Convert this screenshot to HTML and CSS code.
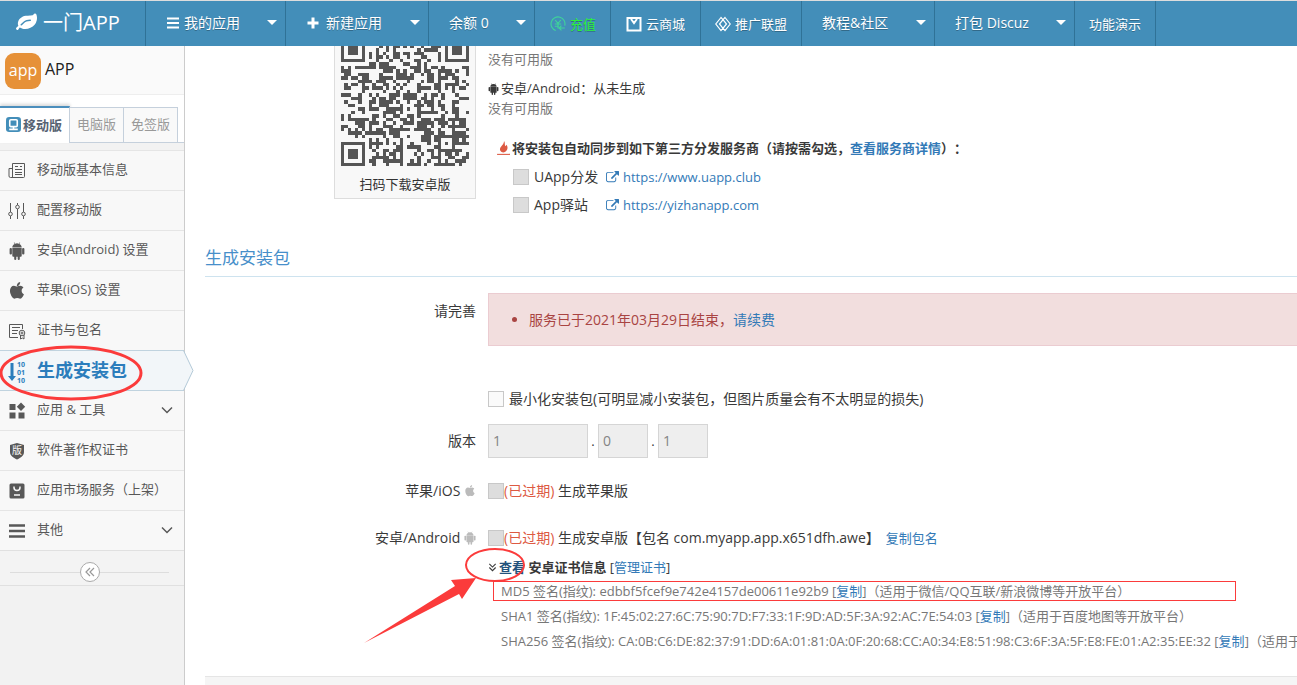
FILE: index.html
```
<!DOCTYPE html>
<html lang="zh-CN">
<head>
<meta charset="utf-8">
<title>一门APP - 生成安装包</title>
<link rel="stylesheet" href="styles.css">
</head>
<body>
<svg class="defs" aria-hidden="true">
  <symbol id="apple" viewBox="0 0 1792 1792"><path d="M1585 1215q-39 125-123 250-129 196-257 196-49 0-140-32-86-32-151-32-61 0-142 33-81 34-132 34-152 0-301-259-147-261-147-503 0-228 113-374 113-144 284-144 72 0 177 30 104 30 138 30 45 0 143-34 102-34 173-34 119 0 213 65 52 36 104 100-79 67-114 118-65 94-65 207 0 124 69 223t158 126zm-376-1173q0 61-29 136-30 75-93 138-54 54-108 72-37 11-104 17 3-149 78-257 74-107 250-148 1 3 2.500 11t2.500 11q0 4 .5 10t.5 10z"/></symbol>
  <symbol id="android" viewBox="0 0 16 18"><path d="M3.300 5.600C3.300 3.600 4.500 2.500 5.600 1.900L4.800.5l.4-.3.900 1.500a5.500 5.500 0 0 1 3.800 0L10.800.2l.4.3-.8 1.400c1.100.6 2.300 1.700 2.300 3.700zM3.300 6h9.400v7.800q0 .9-.9.900h-1v2.200a1.050 1.050 0 0 1-2.100 0v-2.200H7.300v2.200a1.050 1.050 0 0 1-2.100 0v-2.200h-1q-.9 0-.9-.9z"/><rect x=".6" y="6" width="2.300" height="6.400" rx="1"/><rect x="13.100" y="6" width="2.300" height="6.400" rx="1"/></symbol>
  <symbol id="external" viewBox="0 0 1792 1792"><path d="M1408 928v320q0 119-84.500 203.500t-203.500 84.500h-832q-119 0-203.500-84.500t-84.500-203.500v-832q0-119 84.500-203.500t203.500-84.500h704q14 0 23 9t9 23v64q0 14-9 23t-23 9h-704q-66 0-113 47t-47 113v832q0 66 47 113t113 47h832q66 0 113-47t47-113v-320q0-14 9-23t23-9h64q14 0 23 9t9 23zm384-864v512q0 26-19 45t-45 19-45-19l-176-176-652 652q-10 10-23 10t-23-10l-114-114q-10-10-10-23t10-23l652-652-176-176q-19-19-19-45t19-45 45-19h512q26 0 45 19t19 45z"/></symbol>
  <symbol id="leaf" viewBox="0 0 1792 1792"><path d="M1280 704q0-26-19-45t-45-19q-172 0-318 49.500t-259.500 134-235.500 219.500q-19 21-19 45 0 26 19 45t45 19q24 0 45-19 27-24 74-71t67-66q137-124 268.500-176t313.500-52q26 0 45-19t19-45zm512-198q0 95-20 193-46 224-184.500 383t-357.500 268q-214 108-438 108-148 0-286-47-15-5-88-42t-96-37q-16 0-39.500 32t-45 70-52.500 70-60 32q-43 0-63.500-17.500t-45.500-59.500q-2-4-6-11t-5.500-10-3-9.500-1.500-13.500q0-35 31-73.500t68-65.500 68-56 31-48q0-4-14-38t-16-44q-9-51-9-104 0-115 43.500-220t119-184.500 170.500-139 204-95.500q55-18 145-25.500t179.500-9 178.500-6 163.500-24 113.500-56.500l29.500-29.500 29.500-28 27-20 36.500-16 43.500-4.500q39 0 70.500 46t47.500 112 24 124 8 96z"/></symbol>
  <symbol id="chevron" viewBox="0 0 12 12"><path d="M1 3.500l5 5 5-5" fill="none" stroke="currentColor" stroke-width="1.500"/></symbol>
</svg>

<header class="navbar">
  <a class="brand" href="#"><svg><use href="#leaf"/></svg><span>一门APP</span></a>
  <nav class="nav">
    <a class="nav-item w-apps" href="#"><svg class="nav-icon" viewBox="0 0 14 14"><path d="M1 2.500h12M1 7h12M1 11.500h12" stroke="currentColor" stroke-width="2"/></svg><span>我的应用</span><i class="caret"></i></a>
    <a class="nav-item w-new" href="#"><svg class="nav-icon plus" viewBox="0 0 14 14"><path d="M1.500 7h11M7 1.500v11" stroke="currentColor" stroke-width="3"/></svg><span>新建应用</span><i class="caret"></i></a>
    <a class="nav-item w-money" href="#"><span>余额 0</span><i class="caret"></i></a>
    <a class="nav-item small recharge" href="#"><svg class="nav-icon" viewBox="0 0 14 14" fill="none" stroke="currentColor"><path d="M5 12.700A6.100 6.100 0 1 1 12.900 8.500M4.500 3.500L7 6.500l2.500-3M4.200 7h5.600M4.200 9h3.500M7 6.500v4.500M13 10.500H8m2-2l-2 2 2 2"/></svg><span>充值</span></a>
    <a class="nav-item small" href="#"><svg class="nav-icon" viewBox="0 0 16 16" fill="none" stroke="currentColor" stroke-width="2"><path d="M5 2H1.500v12.500h13V2H11M1 2h14M5 3l3 4 3-4"/></svg><span>云商城</span></a>
    <a class="nav-item small union" href="#"><svg class="nav-icon" viewBox="0 0 16 16" fill="none" stroke="currentColor" stroke-width="1.200"><path d="M6 1.500L.8 8 6 14.500l2-2.200L4.500 8 8 3.700zM10 1.500L15.200 8 10 14.500l-2-2.200L11.500 8 8 3.700z"/></svg><span>推广联盟</span></a>
    <a class="nav-item w-course" href="#"><span>教程&amp;社区</span><i class="caret"></i></a>
    <a class="nav-item w-discuz" href="#"><span>打包 Discuz</span><i class="caret"></i></a>
    <a class="nav-item small" href="#"><span>功能演示</span></a>
  </nav>
</header>

<div class="page">
  <aside class="sidebar">
    <div class="app-head"><span class="app-logo">app</span><strong>APP</strong></div>
    <div class="tabs">
      <button class="tab active" type="button"><svg viewBox="0 0 14 14"><rect width="14" height="14" rx="3" fill="#438eb9"/><rect x="3.500" y="2.500" width="7" height="6.500" rx="1" fill="none" stroke="#fff" stroke-width="1.500"/><path d="M3 11.500h8M7 9v2" stroke="#fff" stroke-width="1.500"/></svg>移动版</button>
      <button class="tab" type="button">电脑版</button>
      <button class="tab" type="button">免签版</button>
    </div>
    <ul class="menu">
      <li><a href="#"><svg viewBox="0 0 18 18" fill="none" stroke="currentColor"><path d="M4.500 15.500v-14h12v13q0 1-1 1h-13q-1.500 0-1.500-1.500V6.500h3.500M7 4.500h3M7 7.500h7M7 10.500h7M7 12.500h7M12 4.500h2"/></svg>移动版基本信息</a></li>
      <li><a href="#"><svg viewBox="0 0 18 18" fill="none" stroke="currentColor"><path d="M2.500 1v9M2.500 14v3M9.500 1v2M9.500 7v10M15.500 1v9M15.500 14v3"/><circle cx="2.500" cy="12" r="1.800"/><circle cx="9.500" cy="5" r="1.800"/><circle cx="15.500" cy="12" r="1.800"/></svg>配置移动版</a></li>
      <li><a href="#"><svg><use href="#android"/></svg>安卓(Android) 设置</a></li>
      <li><a href="#"><svg><use href="#apple"/></svg>苹果(iOS) 设置</a></li>
      <li><a href="#"><svg viewBox="0 0 18 18" fill="none" stroke="currentColor"><path d="M10 15.500H1.500v-13h13V7M4 5.500h8M4 8.500h6M4 11.500h5M12.500 13v4l1.800-1 1.700 1v-4"/><circle cx="14" cy="11" r="2.800"/><circle cx="14" cy="11" r="1"/></svg>证书与包名</a></li>
      <li class="current"><a href="#"><svg class="sort" viewBox="0 0 18 24"><path d="M2.500 3h3v13h2.500l-4 5-4-5h2.500z"/><text x="9" y="7">10</text><text x="9" y="15">01</text><text x="9" y="23">10</text></svg>生成安装包</a>
        <svg class="pointer" viewBox="0 0 11 41"><path d="M.5.500l9.500 20-9.500 20" fill="#f2f6f9" stroke="#b3c9d8"/></svg>
        <svg class="mark" viewBox="0 0 144 56"><ellipse cx="71" cy="28" rx="70" ry="26"/></svg></li>
      <li><a href="#"><svg viewBox="0 0 18 18"><path d="M1.500 2h6v6h-6zM1.500 10.500h6v6h-6zM10.500 10.500h6v6h-6zM13 .5l4.200 4.200L13 9 8.800 4.700z"/></svg>应用 &amp; 工具<svg class="fold"><use href="#chevron"/></svg></a></li>
      <li><a href="#"><svg viewBox="0 0 18 18"><path d="M9 1l7 2v7c0 4-4 6-7 7.500C6 16 2 14 2 10V3z"/><text class="shield" x="4" y="12">版</text></svg>软件著作权证书</a></li>
      <li><a href="#"><svg viewBox="0 0 18 18"><rect x="1.500" y="1.500" width="15" height="15" rx="1.500"/><path d="M6 4.500v1a3 3 0 0 0 6 0v-1M6 13h6" fill="none" stroke="#f8f8f8" stroke-width="1.500"/></svg>应用市场服务（上架）</a></li>
      <li><a href="#"><svg viewBox="0 0 18 18"><path d="M1 3.500h16M1 9h16M1 14.500h16" stroke="currentColor" stroke-width="2.500"/></svg>其他<svg class="fold"><use href="#chevron"/></svg></a></li>
    </ul>
    <div class="collapse"><button type="button" aria-label="收起菜单"><svg viewBox="0 0 12 12" fill="none" stroke="currentColor" stroke-width="1.200"><path d="M6 2L2 6l4 4M10 2L6 6l4 4"/></svg></button></div>
  </aside>

  <main class="content">
    <section class="row summary">
      <div class="qr-cell"><figure class="qr"><svg id="qr" viewBox="0 2.300 37 34.700" preserveAspectRatio="none" shape-rendering="crispEdges"></svg><figcaption>扫码下载安卓版</figcaption></figure></div>
      <div class="status">
        <p class="muted">没有可用版</p>
        <p class="platform"><svg class="tiny"><use href="#android"/></svg>安卓/Android：从未生成</p>
        <p class="muted">没有可用版</p>
        <p class="sync"><svg viewBox="0 0 12 14"><path d="M6.500 0C8 2 6.500 3.500 8 5l.7-1.500C10.800 6 9.800 9.800 6 10.800 2.500 10 2 7.500 3.500 5.500 4.500 4 6.500 3 6.500 0z"/><path d="M0 12h12v1H0z"/></svg><b>将安装包自动同步到如下第三方分发服务商（请按需勾选，<a href="#">查看服务商详情</a>）：</b></p>
        <div class="vendor"><label><input type="checkbox" disabled>UApp分发</label><a href="#"><svg class="ext"><use href="#external"/></svg>https://www.uapp.club</a></div>
        <div class="vendor"><label><input type="checkbox" disabled>App驿站</label><a href="#"><svg class="ext"><use href="#external"/></svg>https://yizhanapp.com</a></div>
      </div>
    </section>

    <h3>生成安装包</h3>

    <section class="row alert-row">
      <div class="label">请完善</div>
      <ul class="alert"><li>服务已于2021年03月29日结束，<a href="#">请续费</a></li></ul>
    </section>
    <section class="row minimize">
      <div></div>
      <label class="check spaced"><input type="checkbox">最小化安装包(可明显减小安装包，但图片质量会有不太明显的损失)</label>
    </section>
    <section class="row version">
      <label class="label" for="major">版本</label>
      <div class="fields"><input id="major" class="major" value="1" disabled><span>.</span><input value="0" aria-label="次版本" disabled><span>.</span><input value="1" aria-label="修订版本" disabled></div>
    </section>
    <section class="row ios">
      <div class="label">苹果/iOS <svg class="os"><use href="#apple"/></svg></div>
      <label class="check"><input type="checkbox" disabled><span class="expired">(已过期)</span>&nbsp;生成苹果版</label>
    </section>
    <section class="row droid">
      <div class="label">安卓/Android <svg class="os"><use href="#android"/></svg></div>
      <div class="check"><label class="check"><input type="checkbox" disabled><span class="expired">(已过期)</span>&nbsp;生成安卓版【包名 com.myapp.app.x651dfh.awe】</label><a class="copy" href="#">复制包名</a></div>
    </section>
    <section class="row">
      <div></div>
      <div class="cert">
        <p class="cert-head"><svg class="double" viewBox="0 0 10 10"><path d="M1.500 1L5 4.500 8.500 1M1.500 5L5 8.500 8.500 5" fill="none" stroke="currentColor" stroke-width="1.200"/></svg><a class="view" href="#">查看</a> <b>安卓证书信息</b> [<a href="#">管理证书</a>]
          <svg class="mark-arrow" viewBox="0 0 164 100"><ellipse cx="133" cy="20" rx="29" ry="16"/><path d="M2 98L93 41l-4-6 25-2-14 21-3-5z"/></svg></p>
        <p class="hash boxed">MD5 签名(指纹): edbbf5fcef9e742e4157de00611e92b9 [<a href="#">复制</a>]（适用于微信/QQ互联/新浪微博等开放平台）</p>
        <p class="hash">SHA1 签名(指纹): 1F:45:02:27:6C:75:90:7D:F7:33:1F:9D:AD:5F:3A:92:AC:7E:54:03 [<a href="#">复制</a>]（适用于百度地图等开放平台）</p>
        <p class="hash">SHA256 签名(指纹): CA:0B:C6:DE:82:37:91:DD:6A:01:81:0A:0F:20:68:CC:A0:34:E8:51:98:C3:6F:3A:5F:E8:FE:01:A2:35:EE:32 [<a href="#">复制</a>]（适用于开放平台）</p>
      </div>
    </section>
    <div class="actions"></div>
  </main>
</div>
<script src="qr.js"></script>
</body>
</html>
```

FILE: styles.css
```
* { box-sizing: border-box; }
body {
  margin: 0;
  height: 100vh;
  display: flex;
  flex-direction: column;
  overflow: hidden;
  background: #fff;
  color: #393939;
  font: 13px/20px "Open Sans", "Noto Sans CJK SC", sans-serif;
  text-spacing-trim: space-all;
}
p, ul, h3, figure { margin: 0; padding: 0; }
ul { list-style: none; }
a { color: #337ab7; text-decoration: none; }
:where(svg) { flex: none; }
:where(svg:not([fill])) { fill: currentColor; }
button, input { font: inherit; }
.defs { display: none; }

/* Top bar */
.navbar {
  display: flex;
  flex: none;
  height: 46px;
  border-top: 1px solid #ddd;
  background: #438eb9;
}
.brand {
  display: flex;
  align-items: center;
  gap: 6px;
  width: 145px;
  padding: 0 0 2px 16px;
  color: #fff;
  font-size: 20px;
}
.brand svg { width: 21px; height: 21px; }
.nav { display: flex; border-left: 1px solid #2f7297; }
.nav-item {
  display: flex;
  align-items: center;
  padding: 0 16px 2px 20px;
  border-right: 1px solid #2f7297;
  color: #fff;
  font-size: 14px;
  text-shadow: 0 1px 0 rgba(0, 0, 0, .25);
  white-space: nowrap;
}
.nav-item.small { font-size: 13px; padding: 0 14px; }
.nav-icon { width: 14px; height: 14px; margin-right: 4px; }
.nav-icon.plus { margin-right: 6px; }
.small .nav-icon { width: 16px; height: 16px; }
.w-apps { width: 140px; }
.w-new { width: 143px; }
.w-money { width: 106px; }
.w-course { width: 133px; }
.w-discuz { width: 140px; }
.caret {
  margin-left: auto;
  margin-right: -8px;
  border: 5px solid transparent;
  border-top-color: #fff;
  border-bottom: 0;
}
.nav-item.recharge { padding: 0 14px 0 15px; color: #2bf03c; }
.recharge svg { color: #3fd39a; }
.nav-item.small:nth-child(5) { padding: 0 15px; }

/* Sidebar */
.page { display: flex; flex: 1; min-height: 0; }
.sidebar {
  flex: none;
  width: 185px;
  border-right: 1px solid #ccc;
  background: #f2f2f2;
}
.app-head {
  display: flex;
  gap: 4px;
  height: 49px;
  padding: 7px 5px 0;
  border-bottom: 1px solid #eee;
  background: #fafafa;
  font-size: 16px;
}
.app-head strong { font-weight: 400; line-height: 32px; color: #222; }
.app-logo {
  width: 36px;
  height: 36px;
  border-radius: 9px;
  background: #e69138;
  color: #fff;
  line-height: 34px;
  text-align: center;
}
.tabs {
  display: flex;
  align-items: stretch;
  height: 48px;
  padding-top: 11px;
  background: linear-gradient(#c5d0dc, #c5d0dc) bottom / 100% 1px no-repeat #fff;
}
.tab {
  width: 54px;
  padding: 0 0 2px;
  margin-top: 1px;
  border: 1px solid #c5d0dc;
  border-left: 0;
  background: #f9f9f9;
  color: #999;
}
.tab.active {
  display: flex;
  align-items: center;
  gap: 2px;
  width: 70px;
  margin-top: 0;
  padding-left: 6px;
  border-top: 2px solid #4c8fbd;
  border-bottom: 0;
  background: #fff;
  color: #576373;
  font-weight: 700;
  box-shadow: 0 -2px 3px rgba(0, 0, 0, .15);
}
.tab.active svg { width: 15px; height: 15px; }
.menu { padding-top: 7px; }
.menu li { position: relative; border-top: 1px solid #e5e5e5; background: #f8f8f8; }
.menu a {
  display: flex;
  align-items: center;
  gap: 11px;
  height: 39px;
  padding: 0 10px 4px 8px;
  color: #585858;
}
.menu a svg { width: 18px; height: 18px; margin-top: 4px; }
.menu a .fold { width: 12px; height: 12px; margin: 2px 1px 0 auto; }
.menu .current { border-color: #c0d3df; box-shadow: 0 1px 0 #c0d3df; background: #f2f6f9; z-index: 1; }
.menu .current a { padding-bottom: 2px; color: #2b7dbc; font-size: 18px; font-weight: 700; }
.menu a .sort { height: 24px; }
.sort text { font: 700 7px "Open Sans", sans-serif; }
.menu .shield { font-size: 10px; fill: #f8f8f8; }
.pointer { position: absolute; top: -1px; right: -10px; width: 11px; height: 41px; }
.mark { position: absolute; left: 0; top: -6px; width: 144px; height: 56px; fill: none; stroke: #fb3b3b; stroke-width: 3; }
.collapse {
  height: 36px;
  display: grid;
  place-items: center;
  padding-right: 5px;
  padding-top: 7px;
  border-top: 1px solid #e0e0e0;
  border-bottom: 1px solid #e0e0e0;
  background: linear-gradient(#ddd, #ddd) 10px 21px / 159px 1px no-repeat #f3f3f3;
}
.collapse button {
  display: grid;
  place-items: center;
  width: 20px;
  height: 20px;
  padding: 0;
  border: 1px solid #aaa;
  border-radius: 50%;
  background: #fff;
  color: #999;
}
.collapse svg { width: 12px; height: 12px; }

/* Content */
.content { flex: 1; min-width: 0; padding-left: 20px; overflow: hidden; }
.row { display: grid; grid-template-columns: 25% minmax(0, 1fr); column-gap: 10px; white-space: nowrap; }
.label { padding-right: 2px; text-align: right; font-size: 14px; }
.muted { color: #777; }
.summary { height: 188px; }
.qr-cell { display: flex; justify-content: flex-end; align-items: flex-start; padding-right: 2px; }
.qr { width: 142px; padding: 0 6px 4px; border: 1px solid #ddd; border-top: 0; background: #f8f8f8; text-align: center; color: #333; }
.qr svg { display: block; width: 128px; height: 120px; fill: #555; }
.qr figcaption { padding-top: 8px; }
.status { padding-top: 3px; }
.platform { padding-top: 9px; }
.tiny { width: 11px; height: 12px; margin-right: 2px; vertical-align: -2px; }
.sync { display: flex; align-items: center; gap: 2px; padding: 20px 0 5px 9px; }
.sync svg { width: 13px; height: 15px; color: #dd5a43; }
.vendor { display: flex; align-items: center; height: 28px; padding-left: 25px; }
.vendor label { display: flex; align-items: center; gap: 5px; width: 93px; font-size: 14px; }
.ext { width: 13px; height: 13px; margin-right: 4px; vertical-align: -2px; }
input[type="checkbox"] {
  appearance: none;
  flex: none;
  width: 16px;
  height: 16px;
  margin: 0;
  border: 1px solid #c8c8c8;
  background: #fafafa;
}
input[type="checkbox"]:disabled { background: #ddd; }
h3 {
  padding: 11px 0 5px;
  border-bottom: 1px solid #cee3ef;
  color: #478fca;
  font-size: 17px;
  font-weight: 400;
  line-height: 26px;
}
.alert-row { padding-top: 16px; }
.alert-row .label { padding-top: 8px; }
.alert {
  padding: 16px 40px 15px;
  border: 1px solid #ebccd1;
  border-right: 0;
  background: #f2dede;
  color: #a94442;
  font-size: 14px;
}
.alert li { list-style: disc; }
.minimize { padding-top: 42px; }
.check { display: flex; align-items: center; font-size: 14px; }
.spaced { gap: 5px; height: 22px; }
.version { align-items: center; padding-top: 14px; }
.fields { display: flex; align-items: center; }
.fields input { width: 50px; height: 34px; padding: 0 4px 2px; border: 1px solid #d5d5d5; background: #eee; color: #848484; font-size: 14px; }
.fields .major { width: 100px; }
.fields span { width: 10px; text-align: center; }
.ios { padding-top: 23px; }
.droid { padding-top: 27px; }
.os { width: 12px; height: 14px; color: #bbb; vertical-align: -2px; }
.expired { color: #dd5a43; }
.copy { margin-left: 6px; font-size: 13px; }
.cert { padding-top: 9px; }
.cert-head { position: relative; padding-bottom: 4px; }
.double { width: 9px; height: 9px; margin-right: 2px; }
.view { color: #23527c; font-weight: 700; }
.hash { height: 25px; padding-left: 13px; color: #777; }
.boxed { height: 20px; margin: 0 61px 5px 5px; padding-left: 8px; outline: 1px solid #fb3b3b; outline-offset: -1px; }
.mark-arrow { position: absolute; left: -126px; top: -12px; width: 164px; height: 100px; fill: #fb3b3b; }
.mark-arrow ellipse { fill: none; stroke: #fb3b3b; stroke-width: 2; }
.actions { height: 40px; margin-top: 20px; border-top: 1px solid #e5e5e5; background: #f5f5f5; }
```

FILE: qr.js
```
(function () {
  var size = 37, seed = 20210329, path = "";
  function next() {
    seed = (seed * 1103515245 + 12345) % 2147483648;
    return seed / 2147483648;
  }
  // Concentric square: dark ring at the radius, light ring inside, dark core
  function square(x, y, cx, cy, radius) {
    var d = Math.max(Math.abs(x - cx), Math.abs(y - cy));
    if (d > radius + (radius === 3 ? 1 : 0)) return null;
    return d === radius || d < radius - 1;
  }
  for (var y = 0; y < size; y++) {
    for (var x = 0; x < size; x++) {
      var random = next() > 0.5, dark = random;
      [[3, 3, 3], [33, 3, 3], [3, 33, 3], [30, 30, 2]].forEach(function (f) {
        var s = square(x, y, f[0], f[1], f[2]);
        if (s !== null) dark = s;
      });
      if (dark) path += "M" + x + " " + y + "h1v1h-1z";
    }
  }
  document.getElementById("qr").innerHTML = '<path d="' + path + '"/>';
})();
```
